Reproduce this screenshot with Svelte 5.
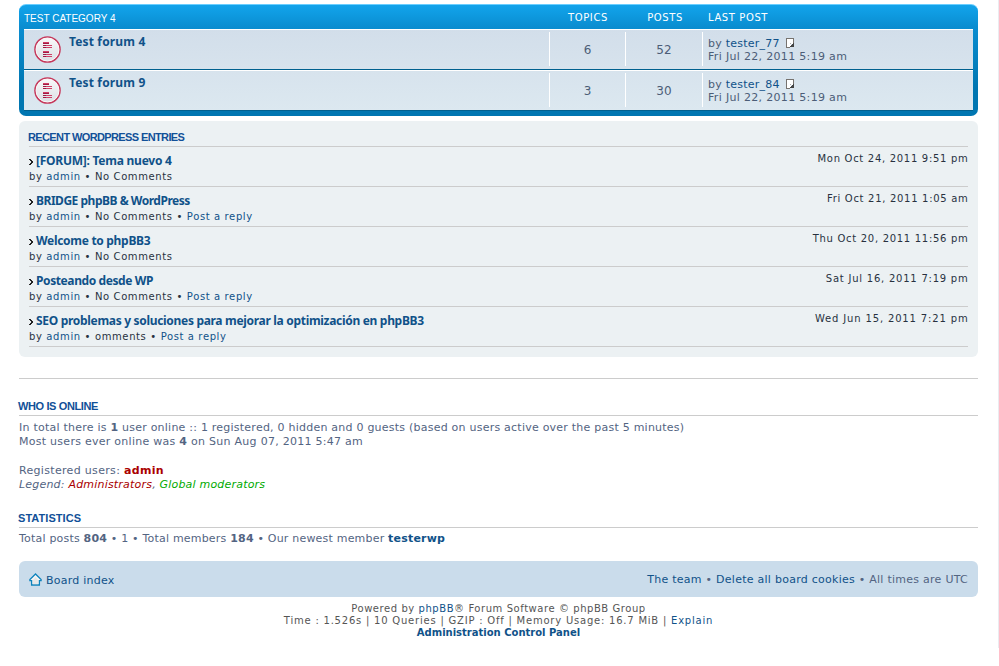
<script>
  const forums = [
    { name: 'Test forum 4', topics: 6, posts: 52, user: 'tester_77' },
    { name: 'Test forum 9', topics: 3, posts: 30, user: 'tester_84' }
  ];
  const entries = [
    { id: 'e1', title: '[FORUM]: Tema nuevo 4', comments: 'No Comments', reply: false, date: 'Mon Oct 24, 2011 9:51 pm' },
    { id: 'e2', title: 'BRIDGE phpBB & WordPress', comments: 'No Comments', reply: true, date: 'Fri Oct 21, 2011 1:05 am' },
    { id: 'e3', title: 'Welcome to phpBB3', comments: 'No Comments', reply: false, date: 'Thu Oct 20, 2011 11:56 pm' },
    { id: 'e4', title: 'Posteando desde WP', comments: 'No Comments', reply: true, date: 'Sat Jul 16, 2011 7:19 pm' },
    { id: 'e5', title: 'SEO problemas y soluciones para mejorar la optimización en phpBB3', comments: 'omments', reply: true, date: 'Wed Jun 15, 2011 7:21 pm' }
  ];
</script>

<div class="page">
  <section class="category">
    <header>
      <span class="cat">TEST CATEGORY 4</span>
      <span class="num">TOPICS</span>
      <span class="num">POSTS</span>
      <span class="last">LAST POST</span>
    </header>
    <div class="rows">
      {#each forums as f}
        <div class="row">
          <svg class="ficon" width="27" height="27" viewBox="0 0 27 27">
            <defs>
              <linearGradient id="disc" x1="0" y1="0" x2="0" y2="1">
                <stop offset="0" stop-color="#f8f8fa" />
                <stop offset="1" stop-color="#dcdfe4" />
              </linearGradient>
            </defs>
            <circle cx="13.5" cy="13.5" r="13.3" fill="#c6395c" />
            <circle cx="13.5" cy="13.5" r="11.5" fill="url(#disc)" stroke="#fafafa" stroke-width="1" />
            <g shape-rendering="crispEdges">
              <path fill="#d04068" d="M9 6h6v1H9zM12 9h6v1h-6zM12 11h6v1h-6zM9 15h6v1H9zM12 18h6v1h-6zM12 20h6v1h-6z" />
              <path fill="#a01a42" d="M9 7h6v1H9zM9 9h3v1H9zM9 11h3v1H9zM9 16h6v1H9zM9 18h3v1H9zM9 20h3v1H9z" />
            </g>
          </svg>
          <a class="fname">{f.name}</a>
          <span class="num topics">{f.topics}</span>
          <span class="num">{f.posts}</span>
          <div class="last">
            <div>by <a>{f.user}</a><svg class="goto" width="9" height="10" viewBox="0 0 9 10" shape-rendering="crispEdges">
                <path fill="#77736f" d="M0 0h8v5H7V1H1v8h3v1H0z" />
                <path fill="#fff" d="M1 1h6v5H5v2H4v1H1z" />
                <path fill="#aaa" d="M4 5h1v1H4zM5 7h1v1H5z" />
                <path fill="#444" d="M8 5v4H4V8h1V7h1V6h1V5z" />
              </svg></div>
            <div class="when">Fri Jul 22, 2011 5:19 am</div>
          </div>
        </div>
      {/each}
    </div>
  </section>

  <section class="panel">
    <h3>RECENT WORDPRESS ENTRIES</h3>
    {#each entries as e}
      <article class={e.id}>
        <div class="info">
          <div class="title">
            <svg width="4" height="6" viewBox="0 0 4 6" shape-rendering="crispEdges">
              <path fill="#222" d="M0 0h2v1H0zM1 1h2v1H1zM2 2h2v2H2zM1 4h2v1H1zM0 5h2v1H0z" />
            </svg>
            <a>{e.title}</a>
          </div>
          <div class="meta">by <a>admin</a> <b>•</b> {e.comments}{#if e.reply}{' '}<b>•</b> <a>Post a reply</a>{/if}</div>
        </div>
        <time>{e.date}</time>
      </article>
    {/each}
  </section>

  <hr />

  <section class="stats online">
    <h3>WHO IS ONLINE</h3>
    <p class="l1">In total there is <strong>1</strong> user online :: 1 registered, 0 hidden and 0 guests (based on users active over the past 5 minutes)</p>
    <p class="l2">Most users ever online was <strong>4</strong> on Sun Aug 07, 2011 5:47 am</p>
    <p class="l3">Registered users: <strong class="adm">admin</strong></p>
    <p class="l4"><em>Legend: <span class="adm">Administrators</span>, <span class="mod">Global moderators</span></em></p>
  </section>

  <section class="stats second">
    <h3>STATISTICS</h3>
    <p class="l5">Total posts <strong>804</strong> • 1 • Total members <strong>184</strong> • Our newest member <strong><a>testerwp</a></strong></p>
  </section>

  <nav>
    <svg width="13" height="13" viewBox="0 0 13 13">
      <path d="M6.5 1 .9 6.6v1H2.6v4.4h7.8V7.6h1.7v-1z" fill="#f6f6f6" stroke="#0e83bd" stroke-width="1.3" />
      <path d="M4 7 6.5 4 9 7v4.3H4z" fill="#ddd" opacity=".6" />
    </svg>
    <a class="index">Board index</a>
    <span class="links"><a>The team</a> • <a>Delete all board cookies</a> • All times are UTC</span>
  </nav>

  <footer>
    <div class="c1">Powered by <a>phpBB</a>® Forum Software © phpBB Group</div>
    <div class="c2">Time : 1.526s | 10 Queries | GZIP : Off | Memory Usage: 16.7 MiB | <a>Explain</a></div>
    <div class="c3"><a>Administration Control Panel</a></div>
  </footer>
</div>

<style>
  :global(body) { margin: 0; background: #fff; overflow: hidden; }
  .page {
    box-sizing: border-box;
    width: 999px;
    height: 648px;
    padding: 4px 20px 0 19px;
    border-right: 1px solid #ebebf0;
    font: 11px/13px "DejaVu Sans", Verdana, sans-serif;
    color: #536482;
    white-space: nowrap;
  }
  a { color: #105289; text-decoration: none; }
  p, h3 { margin: 0; }
  .category {
    box-sizing: border-box;
    height: 112px;
    padding: 0 5px;
    border-radius: 7px;
    border-top: 1px solid #6aceff;
    background: linear-gradient(#12a3eb 0, #0f9ce2 8px, #0a8dd0 22px, #0076b1 84px, #0076b1 100%);
  }
  header {
    display: flex;
    height: 24px;
    line-height: 25px;
    color: #fff;
    font-size: 10px;
    letter-spacing: .6px;
  }
  header .cat { flex: 1; font: 10px/27px "Liberation Sans", Arial, sans-serif; letter-spacing: 0; }
  header .num { width: 76px; text-align: center; }
  header .num:nth-child(2) { margin-right: 1px; }
  header .last { width: 265px; padding-left: 5px; }
  .rows { background: linear-gradient(#d2deea, #dce8f0); }
  .row {
    box-sizing: border-box;
    display: flex;
    height: 41px;
    padding: 2px 0;
    border-top: 1px solid #fff;
    border-bottom: 1px solid #00608f;
    color: #4c5d77;
  }
  .ficon { margin: 4px 0 0 10px; }
  .fname {
    flex: 1;
    margin: 2px 0 0 8px;
    font: bold 12px/16px "Noto Sans", "Trebuchet MS", sans-serif;
    letter-spacing: .15px;
  }
  .row .num {
    box-sizing: border-box;
    width: 77px;
    height: 34px;
    border-left: 1px solid #fff;
    font-size: 12px;
    line-height: 36px;
    text-align: center;
  }
  .row .topics { width: 76px; }
  .row .last {
    box-sizing: border-box;
    width: 271px;
    height: 34px;
    padding: 5px 0 0 5px;
    border-left: 1px solid #fff;
    letter-spacing: .24px;
  }
  .row .last > div { height: 13px; }
  .goto { margin-left: 6px; vertical-align: -1px; }
  .row .when { letter-spacing: .32px; }

  .panel {
    box-sizing: border-box;
    height: 236px;
    margin-top: 5px;
    padding: 10px 10px 0;
    border-radius: 6px;
    background: #ecf1f3;
    color: #28313f;
  }
  h3 {
    box-sizing: border-box;
    border-bottom: 1px solid #ccc;
    font: bold 11px/13px "Liberation Sans", Arial, sans-serif;
    color: #115098;
  }
  .panel h3 { height: 16px; text-indent: -1px; letter-spacing: -.62px; }
  article {
    box-sizing: border-box;
    display: flex;
    justify-content: space-between;
    height: 40px;
    padding-top: 6px;
    border-bottom: 1px solid #ccc;
    font-size: 10px;
  }
  .title { display: flex; align-items: center; height: 17px; }
  .title svg { margin: 1px 3px 0 0; }
  .title a { font: bold 12px/15px "Noto Sans", "Trebuchet MS", sans-serif; letter-spacing: -.25px; margin-top: -2px; }
  .e2 .title a { letter-spacing: -.48px; }
  .e3 .title a { letter-spacing: -.3px; }
  .e4 .title a { letter-spacing: -.4px; }
  .e5 .title a { letter-spacing: -.31px; }
  .meta { line-height: 14px; letter-spacing: .62px; }
  .meta b { font-weight: normal; }
  time { line-height: 12px; letter-spacing: .7px; margin-right: -.5px; }
  .e4 time { letter-spacing: .77px; }
  .e5 time { letter-spacing: .85px; }

  hr { height: 1px; margin: 21px 0 0; border: 0; background: #ccc; }
  .stats { padding-top: 21px; }
  .stats h3 { height: 16px; text-indent: -1px; }
  .online h3 { letter-spacing: -.38px; }
  .stats p { line-height: 14px; }
  .stats .l1 { margin-top: 5px; letter-spacing: .23px; }
  .stats .l2 { letter-spacing: .27px; }
  .stats .l3 { margin-top: 15px; letter-spacing: .32px; }
  .stats .l4 { letter-spacing: .2px; }
  .adm { color: #a00; }
  .mod { color: #0a0; }
  .second { padding-top: 20px; }
  .second h3 { letter-spacing: .05px; }
  .stats .l5 { margin-top: 4px; letter-spacing: .2px; }

  nav {
    box-sizing: border-box;
    display: flex;
    align-items: center;
    height: 36px;
    margin-top: 15px;
    padding: 0 10px;
    border-radius: 6px;
    background: #cadceb;
  }
  .index { margin-left: 4px; padding-top: 2px; letter-spacing: .23px; }
  .links { margin-left: auto; letter-spacing: .26px; }
  footer { padding-top: 6px; font-size: 10px; line-height: 12px; text-align: center; color: #555; }
  .c1 { letter-spacing: .56px; }
  .c2 { letter-spacing: .78px; }
  .c3 { font-weight: bold; }
</style>
